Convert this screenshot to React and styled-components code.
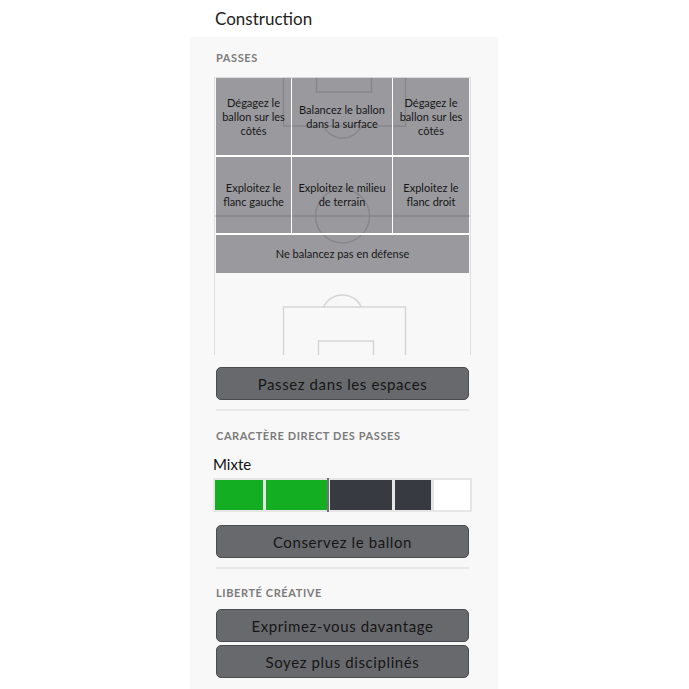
import React from 'react';
import styled, { createGlobalStyle } from 'styled-components';

const GlobalStyle = createGlobalStyle`
  body {
    margin: 0;
    background: #fff;
    font-family: Lato, "Open Sans", sans-serif;
  }
`;

const Page = styled.div`
  width: 308px;
  margin: 0 0 0 190px;
  display: flex;
  flex-direction: column;
`;

const Title = styled.h1`
  height: 37px;
  margin: 0;
  padding-left: 25px;
  display: flex;
  align-items: center;
  font-size: 17px;
  font-weight: 400;
  color: #222;
`;

const Panel = styled.div`
  background: #f8f8f8;
  padding: 14px 26px 14px 23px;
  min-height: 640px;
  display: flex;
  flex-direction: column;
`;

const Label = styled.div`
  margin: ${p => p.$top || 0}px 0 0 3px;
  font-size: 11px;
  line-height: 14px;
  font-weight: 700;
  letter-spacing: 0.6px;
  color: #7b7b7b;
  text-transform: uppercase;
`;

const Pitch = styled.div`
  position: relative;
  margin: 12px 1px 0;
  height: 278px;
  border: 1px solid #dedede;
  border-bottom: none;
  box-sizing: border-box;
`;

const Markings = styled.svg`
  position: absolute;
  left: -1px;
  top: -1px;
`;

const Zones = styled.div`
  position: relative;
  margin: 0 1px;
  display: grid;
  grid-template-columns: 76px 101px 76px;
  grid-template-rows: 79px 78px 38px;
`;

const Zone = styled.div`
  grid-column: ${p => (p.$wide ? '1 / -1' : 'auto')};
  box-sizing: border-box;
  border-right: ${p => (p.$edge ? 0 : 1)}px solid #fff;
  border-bottom: ${p => (p.$wide ? 0 : 2)}px solid #fff;
  background: rgba(40, 40, 48, 0.45);
  display: flex;
  align-items: center;
  justify-content: center;
  text-align: center;
  padding: 0 4px;
  font-size: 11px;
  line-height: 14px;
  color: #161616;
`;

const Button = styled.div`
  margin: ${p => p.$top}px 3px 0;
  height: 33px;
  box-sizing: border-box;
  border: 1px solid #4b4c50;
  border-radius: 5px;
  background: #68696d;
  display: flex;
  align-items: center;
  justify-content: center;
  font-size: 15px;
  letter-spacing: 0.6px;
  color: #161616;
`;

const Divider = styled.div`
  margin: 9px 3px 0;
  height: 2px;
  background: #e8e8e8;
`;

const Value = styled.div`
  margin-top: 12px;
  font-size: 15px;
  line-height: 18px;
  color: #111;
`;

const Bar = styled.div`
  position: relative;
  margin-top: 5px;
  padding: 2px;
  display: flex;
  gap: 3px;
  background: #e6e6e6;
`;

const Segment = styled.div`
  height: 30px;
  background: ${p => p.$color};
`;

const Marker = styled.div`
  position: absolute;
  top: 0;
  bottom: 0;
  width: 2px;
  background: #727272;
`;

const zones = [
  'Dégagez le ballon sur les côtés',
  'Balancez le ballon dans la surface',
  'Dégagez le ballon sur les côtés',
  'Exploitez le flanc gauche',
  'Exploitez le milieu de terrain',
  'Exploitez le flanc droit',
];

const segments = [
  { w: 48, c: '#13ae22' },
  { w: 61, c: '#13ae22' },
  { w: 62, c: '#373a41' },
  { w: 36, c: '#373a41' },
  { w: 36, c: '#ffffff' },
];

const PitchLines = () => (
  <Markings width="257" height="278" viewBox="0 0 257 278" fill="none" stroke="#d6d6d6" strokeWidth="1.5">
    <rect x="69.5" y="0" width="122" height="49" />
    <rect x="102.5" y="0" width="55" height="15" />
    <path d="M 109.5 49 A 21 21 0 0 0 147.5 49" />
    <line x1="0" y1="139" x2="257" y2="139" />
    <circle cx="128.5" cy="139" r="27" />
    <rect x="69.5" y="230" width="122" height="60" />
    <rect x="104.5" y="264" width="55" height="30" />
    <path d="M 109.5 230 A 21 21 0 0 1 147.5 230" />
  </Markings>
);

export default function App() {
  return (
    <Page>
      <GlobalStyle />
      <Title>Construction</Title>
      <Panel>
        <Label>Passes</Label>
        <Pitch>
          <PitchLines />
          <Zones>
            {zones.map((z, i) => (
              <Zone key={i} $edge={i % 3 === 2}>{z}</Zone>
            ))}
            <Zone $wide $edge>Ne balancez pas en défense</Zone>
          </Zones>
        </Pitch>
        <Button $top={12}>Passez dans les espaces</Button>
        <Divider />
        <Label $top={18}>Caractère direct des passes</Label>
        <Value>Mixte</Value>
        <Bar>
          {segments.map((s, i) => (
            <Segment key={i} $color={s.c} style={{ width: s.w }} />
          ))}
          <Marker style={{ left: 114 }} />
        </Bar>
        <Button $top={13}>Conservez le ballon</Button>
        <Divider />
        <Label $top={17}>Liberté créative</Label>
        <Button $top={9}>Exprimez-vous davantage</Button>
        <Button $top={3}>Soyez plus disciplinés</Button>
      </Panel>
    </Page>
  );
}
